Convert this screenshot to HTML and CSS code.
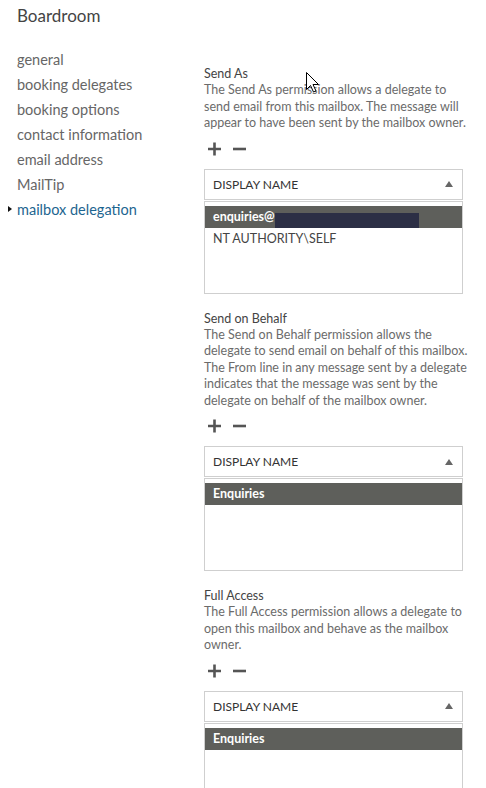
FILE: index.html
```html
<!DOCTYPE html>
<html>
<head>
<meta charset="utf-8">
<link rel="stylesheet" href="styles.css">
</head>
<body>
<div class="page">
  <aside class="side">
    <h1 class="title">Boardroom</h1>
    <ul class="nav">
      <li>general</li>
      <li>booking delegates</li>
      <li>booking options</li>
      <li>contact information</li>
      <li>email address</li>
      <li>MailTip</li>
      <li class="active">mailbox delegation</li>
    </ul>
  </aside>
  <main class="main">
    <section class="sec">
      <div class="text">
        <div class="label">Send As</div>
        <div class="desc">The Send As permission allows a delegate to<br>send email from this mailbox. The message will<br>appear to have been sent by the mailbox owner.</div>
      </div>
      <div class="tools">
        <svg class="ico" viewBox="0 0 15 14"><path d="M1 7H14M7.5 0.5V13.5" stroke="#555" stroke-width="2.6" fill="none"/></svg>
        <svg class="ico" viewBox="0 0 15 14"><path d="M1 7H14" stroke="#555" stroke-width="2.6" fill="none"/></svg>
      </div>
      <div class="grid-head"><span>DISPLAY NAME</span><span class="sort"></span></div>
      <div class="grid-list">
        <div class="row sel">enquiries@<span class="redact"></span></div>
        <div class="row">NT AUTHORITY\SELF</div>
      </div>
    </section>
    <section class="sec">
      <div class="text">
        <div class="label">Send on Behalf</div>
        <div class="desc">The Send on Behalf permission allows the<br>delegate to send email on behalf of this mailbox.<br>The From line in any message sent by a delegate<br>indicates that the message was sent by the<br>delegate on behalf of the mailbox owner.</div>
      </div>
      <div class="tools">
        <svg class="ico" viewBox="0 0 15 14"><path d="M1 7H14M7.5 0.5V13.5" stroke="#555" stroke-width="2.6" fill="none"/></svg>
        <svg class="ico" viewBox="0 0 15 14"><path d="M1 7H14" stroke="#555" stroke-width="2.6" fill="none"/></svg>
      </div>
      <div class="grid-head"><span>DISPLAY NAME</span><span class="sort"></span></div>
      <div class="grid-list">
        <div class="row sel">Enquiries</div>
      </div>
    </section>
    <section class="sec">
      <div class="text">
        <div class="label">Full Access</div>
        <div class="desc">The Full Access permission allows a delegate to<br>open this mailbox and behave as the mailbox<br>owner.</div>
      </div>
      <div class="tools">
        <svg class="ico" viewBox="0 0 15 14"><path d="M1 7H14M7.5 0.5V13.5" stroke="#555" stroke-width="2.6" fill="none"/></svg>
        <svg class="ico" viewBox="0 0 15 14"><path d="M1 7H14" stroke="#555" stroke-width="2.6" fill="none"/></svg>
      </div>
      <div class="grid-head"><span>DISPLAY NAME</span><span class="sort"></span></div>
      <div class="grid-list">
        <div class="row sel">Enquiries</div>
      </div>
    </section>
  </main>
  <svg class="cursor" viewBox="0 0 13 21" width="13" height="21"><path d="M0.5 0.5V17.5L4.5 13.5L7.5 20L10 19L7 12.5H12.5Z" fill="#fff" stroke="#000" stroke-width="1"/></svg>
</div>
</body>
</html>
```

FILE: styles.css
```css
html, body {
  margin: 0;
  padding: 0;
  background: #fff;
}
body {
  font-family: Lato, "Open Sans", sans-serif;
  width: 486px;
  height: 788px;
  overflow: hidden;
}
.page {
  position: relative;
  display: flex;
  height: 788px;
}
.side {
  width: 204px;
  flex: none;
}
.title {
  margin: 4px 0 0 17px;
  font-size: 17px;
  font-weight: 400;
  color: #444;
  line-height: 24px;
}
.nav {
  list-style: none;
  margin: 19px 0 0 0;
  padding: 0;
}
.nav li {
  position: relative;
  padding-left: 17px;
  height: 25px;
  line-height: 25px;
  font-size: 14.5px;
  font-weight: 400;
  color: #666;
}
.nav li.active {
  color: #1d6590;
}
.nav li.active::before {
  content: "";
  position: absolute;
  left: 8px;
  top: 9px;
  border-left: 4px solid #111;
  border-top: 3.5px solid transparent;
  border-bottom: 3.5px solid transparent;
}
.main {
  width: 259px;
  flex: none;
  padding-top: 66px;
}
.sec {
  margin-bottom: 17px;
}
.text {
  font-size: 12.5px;
  line-height: 16.4px;
  white-space: nowrap;
}
.label {
  color: #444;
}
.desc {
  color: #6b6b6b;
}
.tools {
  display: flex;
  gap: 10px;
  margin: 10px 0 13px 3px;
  height: 14px;
}
.ico {
  width: 15px;
  height: 14px;
  display: block;
}
.grid-head {
  box-sizing: border-box;
  height: 31px;
  border: 1px solid #cfcfcf;
  display: flex;
  align-items: center;
  justify-content: space-between;
  padding: 0 8px 0 8px;
  font-size: 12px;
  color: #333;
}
.sort {
  width: 0;
  height: 0;
  border-left: 4px solid transparent;
  border-right: 4px solid transparent;
  border-bottom: 6px solid #666;
  margin-right: 1px;
}
.grid-list {
  box-sizing: border-box;
  margin-top: 1px;
  height: 93px;
  border: 1px solid #cfcfcf;
  padding-top: 4px;
}
.row {
  height: 22px;
  line-height: 22px;
  padding-left: 8px;
  font-size: 12.5px;
  color: #444;
}
.row.sel {
  background: #5e5f5b;
  color: #fff;
  font-weight: 700;
  display: flex;
  align-items: center;
}
.redact {
  display: inline-block;
  width: 144px;
  height: 15px;
  margin-top: 7px;
  background: #2c2f45;
}
.cursor {
  position: absolute;
  left: 306px;
  top: 72px;
}
```
